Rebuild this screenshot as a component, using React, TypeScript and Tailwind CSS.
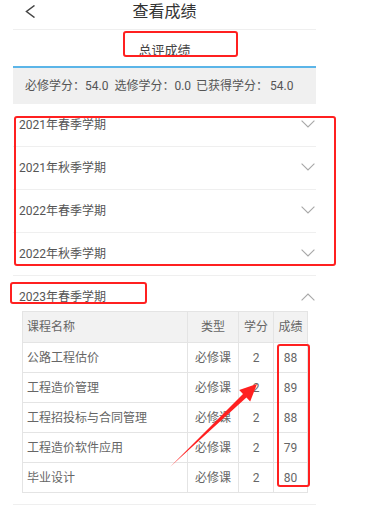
import React from "react";

const semesters = ["2021年春季学期", "2021年秋季学期", "2022年春季学期", "2022年秋季学期"];

const courses = [
  { name: "公路工程估价", type: "必修课", credit: "2", score: "88" },
  { name: "工程造价管理", type: "必修课", credit: "2", score: "89" },
  { name: "工程招投标与合同管理", type: "必修课", credit: "2", score: "88" },
  { name: "工程造价软件应用", type: "必修课", credit: "2", score: "79" },
  { name: "毕业设计", type: "必修课", credit: "2", score: "80" },
];

function ChevronDown() {
  return (
    <svg width="14" height="8" viewBox="0 0 14 8" fill="none">
      <polyline points="0.6,0.6 7,7 13.4,0.6" stroke="#a8a8a8" strokeWidth="1.1" />
    </svg>
  );
}

function ChevronUp() {
  return (
    <svg width="14" height="8" viewBox="0 0 14 8" fill="none">
      <polyline points="0.6,7.4 7,1 13.4,7.4" stroke="#a8a8a8" strokeWidth="1.1" />
    </svg>
  );
}

export default function App() {
  const cell = "border-r border-b border-[#e4e4e4] flex items-center";
  return (
    <div
      className="relative w-[376px] h-[516px] bg-white overflow-hidden text-[#555]"
      style={{ fontFamily: 'Roboto, "Noto Sans CJK SC", sans-serif' }}
    >
      <div className="ml-[13px] w-[303px]">
        {/* Header */}
        <div className="h-[30px] border-b border-[#efefef] grid grid-cols-[1fr_auto_1fr] items-start">
          <div className="pl-[12px] pt-[5px]">
            <svg width="11" height="13" viewBox="0 0 11 13" fill="none">
              <polyline points="9.5,0.5 1.5,6.5 9.5,12.5" stroke="#444" strokeWidth="1.5" />
            </svg>
          </div>
          <div className="pt-[2px] text-[16px] leading-[20px] text-[#333]">查看成绩</div>
          <div />
        </div>
        {/* Tab */}
        <div className="h-[36px] flex items-center justify-center pt-[5px] text-[13px] text-[#444]">
          总评成绩
        </div>
        <div className="h-[2px] bg-[#5bb5e8]" />
        {/* Summary */}
        <div className="h-[36px] bg-[#f0f0f0] flex items-center pl-[12px] text-[12px] text-[#555] whitespace-nowrap">
          <span>必修学分：54.0</span>
          <span className="ml-[6px]">选修学分：0.0</span>
          <span className="ml-[5px]">
            已获得学分：<span className="ml-[2px]">54.0</span>
          </span>
        </div>
        {/* Semesters */}
        {semesters.map((s) => (
          <div
            key={s}
            className="h-[43px] border-b border-[#efefef] flex items-center justify-between pl-[6px] pr-[1px] text-[12px] text-[#555]"
          >
            <span>{s}</span>
            <span className="-mt-[3px]">
              <ChevronDown />
            </span>
          </div>
        ))}
        {/* Open semester */}
        <div className="border-b border-[#efefef] pb-[11px]">
          <div className="h-[35px] pt-[6px] flex items-center justify-between pl-[6px] pr-[1px] text-[12px] text-[#555]">
            <span>2023年春季学期</span>
            <ChevronUp />
          </div>
          <div className="ml-[9px] w-[286px] border-l border-t border-[#e4e4e4] text-[12px] text-[#666]">
            <div className="grid grid-cols-[165px_51px_35px_34px] h-[31px] bg-[#f2f2f2]">
              <div className={`${cell} pl-[4px]`}>课程名称</div>
              <div className={`${cell} justify-center`}>类型</div>
              <div className={`${cell} justify-center`}>学分</div>
              <div className={`${cell} justify-center`}>成绩</div>
            </div>
            {courses.map((c) => (
              <div key={c.name} className="grid grid-cols-[165px_51px_35px_34px] h-[30px]">
                <div className={`${cell} pl-[4px]`}>{c.name}</div>
                <div className={`${cell} justify-center`}>{c.type}</div>
                <div className={`${cell} justify-center`}>{c.credit}</div>
                <div className={`${cell} justify-center`}>{c.score}</div>
              </div>
            ))}
          </div>
        </div>
      </div>

      {/* Annotations */}
      <div className="absolute left-[123px] top-[31px] w-[115px] h-[26px] border-2 border-[#ff2020] rounded-[3px]" />
      <div className="absolute left-[14px] top-[116px] w-[322px] h-[150px] border-2 border-[#ff2020] rounded-[3px]" />
      <div className="absolute left-[10px] top-[282px] w-[137px] h-[22px] border-2 border-[#ff2020] rounded-[3px]" />
      <div className="absolute left-[277px] top-[344px] w-[33px] h-[143px] border-2 border-[#ff2020] rounded-[3px]" />
      <svg className="absolute left-0 top-0 pointer-events-none" width="376" height="516" viewBox="0 0 376 516">
        <polygon
          points="170,467 243,393.9 239.2,389.9 257,384 250.2,401.5 246.4,397.5"
          fill="#ff2020"
        />
      </svg>
    </div>
  );
}
